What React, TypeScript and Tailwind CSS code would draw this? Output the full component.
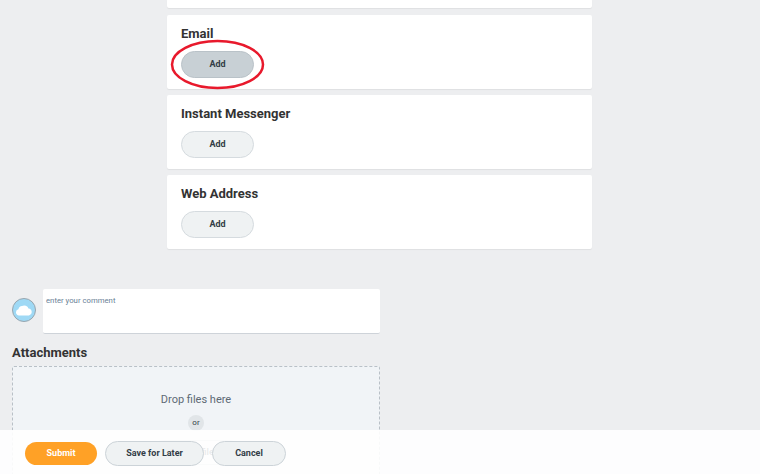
const cards = ["Email", "Instant Messenger", "Web Address"];

const AddButton = ({ active }: { active: boolean }) => (
  <button
    className={`w-[73px] h-[27px] rounded-full border text-[9px] font-bold text-[#333d47] ${
      active ? "bg-[#c8d0d5] border-[#b9c2c8]" : "bg-[#eff2f3] border-[#d5dbdf]"
    }`}
  >
    Add
  </button>
);

const App = () => {
  return (
    <div className="relative w-[760px] h-[474px] overflow-hidden bg-[#edeef0] font-['Roboto',sans-serif]">
      <div className="flex flex-col gap-[6px] w-[425px] ml-[167px] -mt-[1px]">
        <div className="h-[9px] mb-[1px] bg-white rounded-[2px] shadow-[0_1px_1px_rgba(0,0,0,0.06)]" />
        {cards.map((title) => (
          <section
            key={title}
            className="h-[74px] bg-white rounded-[2px] px-[14px] pt-[10px] shadow-[0_1px_1px_rgba(0,0,0,0.06)]"
          >
            <h2 className="text-[13px] leading-[17px] font-bold text-[#333333]">{title}</h2>
            <div className="flex mt-[9px]">
              <AddButton active={title === "Email"} />
            </div>
          </section>
        ))}
      </div>

      <svg className="absolute left-[170px] top-[39px]" width="96" height="52" viewBox="0 0 96 52" fill="none">
        <ellipse cx="47.5" cy="25.5" rx="45.5" ry="23.5" stroke="#e8192c" strokeWidth="2.5" />
      </svg>

      <div className="flex gap-[7px] mt-[40px] ml-[12px] w-[368px]">
        <div className="mt-[9px] w-[24px] h-[24px] rounded-full bg-[#9fd9f5] border border-[#9aa5ad] flex items-center justify-center">
          <svg width="18" height="12" viewBox="0 0 18 12" fill="white">
            <path d="M4 11.5a3.2 3.2 0 0 1-.6-6.3A4 4 0 0 1 7 2 4.6 4.6 0 0 1 13.5 4.6 3.5 3.5 0 0 1 14 11.5Z" />
          </svg>
        </div>
        <div className="flex-1 h-[45px] bg-white rounded-[2px] border-b border-[#ced3d9] pl-[3px] pr-[4px] pt-[7px] text-[7.75px] leading-[10px] text-[#6a7f96]">
          enter your comment
        </div>
      </div>

      <div className="ml-[12px] w-[368px]">
        <h2 className="mt-[10px] text-[13px] leading-[17px] font-bold text-[#333333]">Attachments</h2>
        <div className="mt-[5px] h-[120px] bg-[#f1f4f7] border border-dashed border-[#b9c0c7] rounded-[2px] flex flex-col items-center pt-[25px]">
          <p className="text-[11px] leading-[15px] text-[#5e6a75]">Drop files here</p>
          <span className="mt-[8px] w-[16px] h-[16px] rounded-full bg-[#e1e5e8] text-[8px] leading-[16px] text-center text-[#333d47]">
            or
          </span>
          <button className="mt-[9px] w-[90px] h-[25px] rounded-full bg-[#f7f8f9] border border-[#ccd3d8] text-[9px] font-bold text-[#333d47]">
            Select files
          </button>
        </div>
      </div>

      <footer className="absolute left-0 right-0 bottom-0 h-[44px] bg-white/90 flex items-start pt-[11px] pl-[25px]">
        <button className="w-[72px] h-[23px] mt-[1px] rounded-full bg-[#ffa126] text-[9px] font-bold text-white">
          Submit
        </button>
        <button className="ml-[8px] w-[99px] h-[25px] rounded-full bg-[#eff2f3] border border-[#ccd3d8] text-[9px] font-bold text-[#333d47]">
          Save for Later
        </button>
        <button className="ml-[8px] w-[74px] h-[25px] rounded-full bg-[#eff2f3] border border-[#ccd3d8] text-[9px] font-bold text-[#333d47]">
          Cancel
        </button>
      </footer>
    </div>
  );
};

export default App;
